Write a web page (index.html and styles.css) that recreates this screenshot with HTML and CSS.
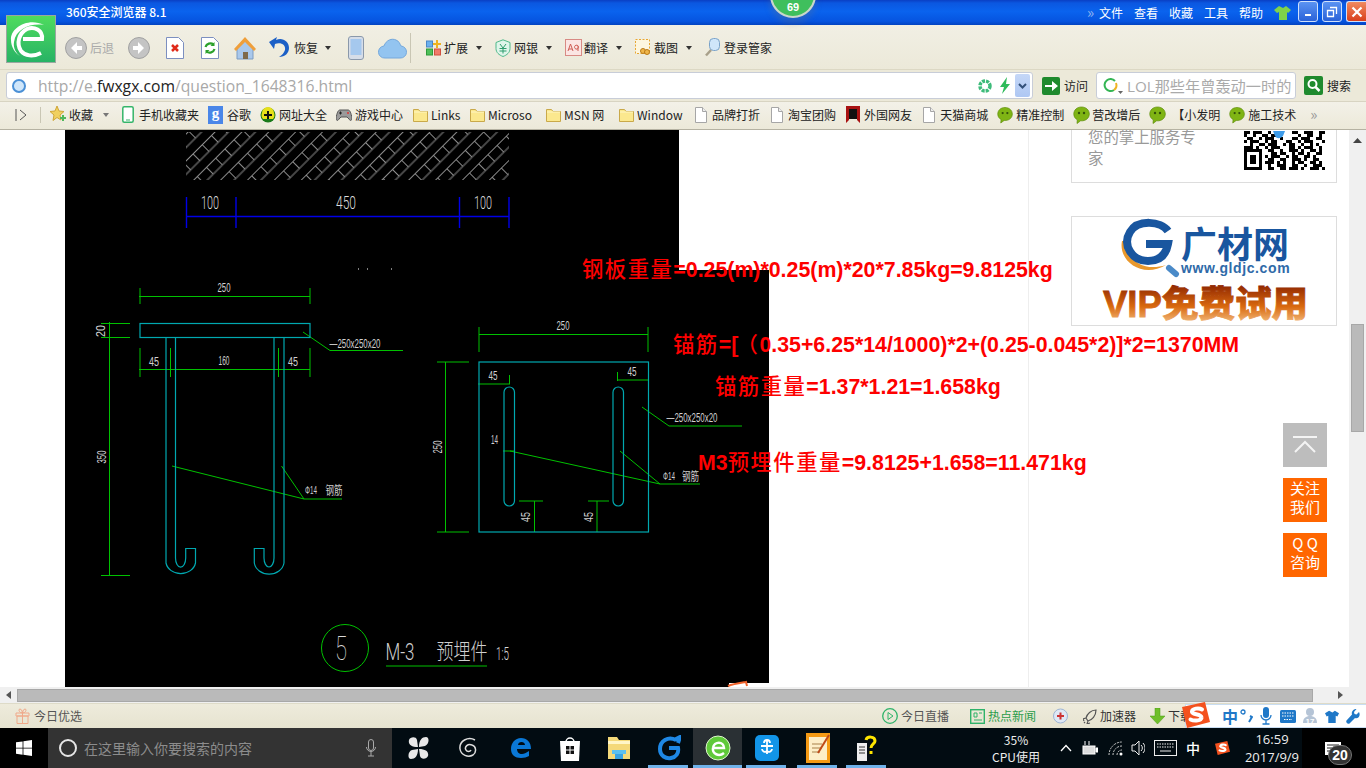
FILE: index.html
```html
<!DOCTYPE html>
<html lang="zh-CN">
<head>
<meta charset="utf-8">
<title>360安全浏览器 8.1</title>
<link rel="stylesheet" href="styles.css">
</head>
<body>
<svg class="defs" width="0" height="0" aria-hidden="true">
  <defs>
    <symbol id="i-folder" viewBox="0 0 15 15"><path d="M.5 2.500h5l1.500 2h7.500v10H.5z" fill="#fbe88e" stroke="#c9a94a"/><path d="M1 5h13" stroke="#fff6c4"/></symbol>
    <symbol id="i-doc" viewBox="0 0 12 16"><path d="M.5.5h7l4 4v11H.5z" fill="#fff" stroke="#a6a6a6"/><path d="M7.500.5v4h4" fill="#eee" stroke="#a6a6a6"/></symbol>
    <symbol id="i-chat" viewBox="0 0 17 18"><path d="M8.500 1C4 1 .8 4 .8 8c0 2.700 1.400 4.600 3.500 5.800L4 17.500l3.600-2.700C12.800 15.300 16.300 12 16.300 8 16.300 4 13 1 8.500 1z" fill="#7fb414" stroke="#5c8c08" stroke-width=".7"/><circle cx="6" cy="7" r="1.200" fill="#33510a"/><circle cx="11" cy="7" r="1.200" fill="#33510a"/></symbol>
    <symbol id="i-s" viewBox="0 0 28 26"><path d="M0 5L23 0l5 20-23 6z" fill="#f4511e"/><path d="M20 7.500c-3-2-10-1-10 2-.5 3.500 9 2 9.500 6 .5 3-7 4-11 2" fill="none" stroke="#fff" stroke-width="4" stroke-linecap="round"/></symbol>
    <linearGradient id="vip" x1="0" y1="0" x2="0" y2="1"><stop offset="0" stop-color="#8c2400"/><stop offset=".55" stop-color="#d9690f"/><stop offset="1" stop-color="#f5c48a"/></linearGradient>
    <pattern id="hatch" width="26" height="19" patternUnits="userSpaceOnUse" patternTransform="rotate(-45 186 132)">
      <path d="M0 .5H26M0 10H26M6.500 .5V10M19.500 .5V10" stroke="#8c8c8c" stroke-width="1" fill="none"/>
    </pattern>
  </defs>
</svg>

<div class="screen">
  <header class="titlebar">
    <span class="app-title">360安全浏览器 8.1</span>
    <span class="chev g-auto">»</span>
    <nav class="menu">
      <span>文件</span><span>查看</span><span>收藏</span><span>工具</span><span>帮助</span>
    </nav>
    <svg class="g11 w17" height="16" viewBox="0 0 17 16"><path d="M5 1L0 5l3 3 2-1v8h8V7l1 1 3-3-5-4-3 2z" fill="#7fd24a"/></svg>
    <div class="winbtns">
      <span class="winbtn"><svg width="10" height="10" viewBox="0 0 10 10"><path d="M2 7h6v2H2z" fill="#fff"/></svg></span>
      <span class="winbtn"><svg width="12" height="12" viewBox="0 0 12 12"><path d="M4 1.500h6.500V8M1.500 4.500h6v6h-6z" fill="none" stroke="#fff" stroke-width="1.300"/></svg></span>
      <span class="winbtn close"><svg width="12" height="12" viewBox="0 0 12 12"><path d="M1.500 1.500l9 9M10.500 1.500l-9 9" stroke="#fff" stroke-width="2.200"/></svg></span>
    </div>
  </header>

  <div class="badge69"><span>69</span></div>

  <svg class="logo360" width="50" height="48" viewBox="0 0 50 48">
    <defs><linearGradient id="tile" x1="0" y1="0" x2="0" y2="1"><stop offset="0" stop-color="#4fdc5e"/><stop offset="1" stop-color="#27b265"/></linearGradient></defs>
    <rect x=".5" y=".5" width="49" height="47" fill="url(#tile)" stroke="#9aa7a0"/>
    <path d="M17 24h19c1-9-8-13-15-10-8 4-11 14-6 22 4 5 12 6 20 2" fill="none" stroke="#fff" stroke-width="4"/>
    <path d="M5 25C4 13 22 2 38 10 24 8 10 14 8 27c-1 6 2 11 6 14C9 38 5 32 5 25z" fill="#fff"/>
  </svg>

  <div class="toolbar">
    <svg class="w22" height="22" viewBox="0 0 22 22"><circle cx="11" cy="11" r="10.500" fill="#c4c4c4" stroke="#a0a0a0"/><path d="M12 5l-6 6 6 6v-4h5V9h-5z" fill="#fff"/></svg>
    <span class="g3 muted">后退</span>
    <svg class="g14 w22" height="22" viewBox="0 0 22 22"><circle cx="11" cy="11" r="10.500" fill="#c4c4c4" stroke="#a0a0a0"/><path d="M10 5l6 6-6 6v-4H5V9h5z" fill="#fff"/></svg>
    <svg class="g16 w18" height="22" viewBox="0 0 18 22"><path d="M.5.5h12l5 5v16H.5z" fill="#fff" stroke="#7c8fc0"/><path d="M6 8l6 6M12 8l-6 6" stroke="#e02a1a" stroke-width="2.500"/></svg>
    <svg class="g17 w18" height="22" viewBox="0 0 18 22"><path d="M.5.500h12l5 5v16H.5z" fill="#fff" stroke="#7c8fc0"/><path d="M4.500 10a5 5 0 0 1 8-2.500M13.500 12a5 5 0 0 1-8 2.500" fill="none" stroke="#2ba02b" stroke-width="2.200"/><path d="M13.500 5v4h-4zM4.500 17v-4h4z" fill="#2ba02b"/></svg>
    <svg class="g14 w24" height="24" viewBox="0 0 24 24"><path d="M4 12v11h16V12L12 5z" fill="#a9c8ec" stroke="#7d9cc2"/><path d="M10 23v-7h5v7z" fill="#7f6a4b"/><path d="M1 13L12 1l11 12-2 2-9-9-9 9z" fill="#ef9f3b"/></svg>
    <svg class="g11 w22" height="24" viewBox="0 0 22 24"><path d="M9 1L1 6l5 7 1-5c6-2 11 1 10 6-1 3-3 5-6 7 6 0 10-4 10-9C21 5 14 1 8 4z" fill="#1b5fc6"/></svg>
    <span class="g4">恢复</span>
    <span class="caret g7"></span>
    <svg class="g17 w16" height="24" viewBox="0 0 16 24"><rect x=".5" y=".5" width="15" height="23" rx="2.500" fill="#d6dde8" stroke="#8a98aa"/><rect x="2.500" y="3" width="11" height="16" fill="#a5c8ee"/></svg>
    <svg class="g14 w29" height="22" viewBox="0 0 29 22"><path d="M7 21a6 6 0 0 1-1-12C8 3 14 1 18 3c3 1 4 4 5 6a6 6 0 0 1-1 12z" fill="#93c4f0" stroke="#74a8dc"/></svg>
    <i class="vsep g3"></i>
    <svg class="g15 w15" height="16" viewBox="0 0 15 16"><rect x=".5" y="1" width="6" height="6" fill="#6bb0ee" stroke="#4a86c8"/><rect x=".5" y="9" width="6" height="6" fill="#4fc05a" stroke="#2f9a3a"/><rect x="8.500" y="9" width="6" height="6" fill="#f07b6b" stroke="#d0503f"/><path d="M10 0h2v3h3v2h-3v3h-2V5H7V3h3z" fill="#efb320"/></svg>
    <span class="g3">扩展</span>
    <span class="caret g8"></span>
    <svg class="g13 w16" height="18" viewBox="0 0 16 18"><path d="M8 .8l7 2.700v6c0 4-3 6.500-7 8-4-1.500-7-4-7-8v-6z" fill="#dff5ea" stroke="#4fb98a"/><path d="M5 5l3 4 3-4M4.500 9.500h7M4.500 12h7M8 9v5.500" fill="none" stroke="#2f9d6e"/></svg>
    <span class="g3">网银</span>
    <span class="caret g8"></span>
    <svg class="g13 w17" height="17" viewBox="0 0 17 17"><rect x=".5" y=".5" width="16" height="16" fill="#fbe5e3" stroke="#d88a84"/><path d="M3 12l2.500-7 2.500 7M4 10h3M13 7v5M13 9.500a2 2 0 1 0-.1.100" fill="none" stroke="#cf5c54"/></svg>
    <span class="g2">翻译</span>
    <span class="caret g8"></span>
    <svg class="g13 w15" height="17" viewBox="0 0 15 17"><rect x=".5" y=".5" width="14" height="14" fill="#fdf6df" stroke="#e8a732" stroke-dasharray="2 1.500"/><circle cx="8" cy="12" r="2.500" fill="#f0b64a" stroke="#b97a18"/><circle cx="12" cy="13" r="2.500" fill="#f0b64a" stroke="#b97a18"/></svg>
    <span class="g4">截图</span>
    <span class="caret g8"></span>
    <svg class="g13 w15" height="19" viewBox="0 0 15 19"><rect x="4.500" y=".5" width="10" height="12" rx="4" fill="#cfe6fa" stroke="#7aa2c8"/><path d="M6 12l-5 5.500" stroke="#a8a08a" stroke-width="2.500"/></svg>
    <span class="g4">登录管家</span>
  </div>

  <div class="addrbar">
    <div class="urlbox">
      <svg class="w14" height="14" viewBox="0 0 14 14"><circle cx="7" cy="7" r="6" fill="#cfe6fa" stroke="#4b90d6" stroke-width="2"/></svg>
      <span class="url">http://e.<b>fwxgx.com</b>/question_1648316.html</span>
      <svg class="g-auto w14" height="14" viewBox="0 0 14 14"><circle cx="7" cy="7" r="5" fill="none" stroke="#3dbb7a" stroke-width="3.500" stroke-dasharray="3 1"/></svg>
      <svg class="g7 w12" height="17" viewBox="0 0 12 17"><path d="M8 0L1 10h4l-2 7 8-10H7z" fill="#2fbb5a"/></svg>
      <span class="dropdown g4"><svg width="9" height="6" viewBox="0 0 9 6"><path d="M1 1l3.500 3.500L8 1" fill="none" stroke="#33507a" stroke-width="2"/></svg></span>
    </div>
    <svg class="g9 w18" height="18" viewBox="0 0 18 18"><rect width="18" height="18" rx="2" fill="#1f8a2e"/><path d="M3 8h7V4l6 5-6 5v-4H3z" fill="#fff"/></svg>
    <span class="g4">访问</span>
    <div class="searchbox">
      <svg class="w20" height="16" viewBox="0 0 20 16"><path d="M11 12a6 6 0 1 1 1-9" fill="none" stroke="#34b554" stroke-width="2"/><path d="M13 5a6 6 0 0 1-2 7" fill="none" stroke="#f0b323" stroke-width="2"/><path d="M15 13h5l-2.500 3z" fill="#666"/></svg>
      <span class="placeholder">LOL那些年曾轰动一时的</span>
    </div>
    <svg class="g8 w19" height="19" viewBox="0 0 19 19"><rect width="19" height="19" rx="2" fill="#1f8a2e"/><circle cx="8.500" cy="8" r="4" fill="none" stroke="#fff" stroke-width="2"/><path d="M11.500 11l4 4" stroke="#fff" stroke-width="2.500"/></svg>
    <span class="g4">搜索</span>
  </div>

  <div class="bookmarks">
    <svg class="w12 g15" height="12" viewBox="0 0 12 12"><path d="M1 0v12M5 1l6 5-6 5" fill="none" stroke="#555"/></svg>
    <i class="vsep short g13"></i>
    <svg class="g9 w16" height="17" viewBox="0 0 16 17"><path d="M7 0l2 5 5 .5-4 3.500 1 5-4-2.500L3 14.500l1-5.500L0 5.500 5 5z" fill="#f0d060" stroke="#cfa638"/><path d="M10 11h2V9h2v2h2v2h-2v2h-2v-2h-2z" fill="#4fb85a"/></svg>
    <span class="g3">收藏</span>
    <span class="caret gray g10"></span>
    <svg class="g13 w12" height="17" viewBox="0 0 12 17"><rect x=".8" y=".8" width="10.400" height="15.400" rx="1.500" fill="#fff" stroke="#35b56a" stroke-width="1.500"/><path d="M4 14h4" stroke="#35b56a"/></svg>
    <span class="g5">手机收藏夹</span>
    <span class="gbox g9">g</span>
    <span class="g4">谷歌</span>
    <svg class="g9 w16" height="16" viewBox="0 0 16 16"><circle cx="8" cy="8" r="7.500" fill="#1a7a1a"/><path d="M2 6a6 6 0 0 1 12 0 6 6 0 0 1-1 6H3a6 6 0 0 1-1-6z" fill="#e8e01a"/><path d="M7 4h2v3h3v2H9v3H7V9H4V7h3z" fill="#111"/></svg>
    <span class="g3">网址大全</span>
    <svg class="g9 w16" height="12" viewBox="0 0 16 12"><path d="M4 1h8c2 0 3 3 4 8 0 3-2 3-3 1l-2-2H5l-2 2c-1 2-3 2-3-1 1-5 2-8 4-8z" fill="#9a9a9a" stroke="#555"/><circle cx="12" cy="4" r="1" fill="#d33"/><path d="M3 4h3M4.500 2.500v3" stroke="#222"/></svg>
    <span class="g3">游戏中心</span>
    <svg class="g10 w15" height="15"><use href="#i-folder"/></svg>
    <span class="g3 bt29">Links</span>
    <svg class="g10 w15" height="15"><use href="#i-folder"/></svg>
    <span class="g3 bt48">Microso</span>
    <svg class="g10 w15" height="15"><use href="#i-folder"/></svg>
    <span class="g3 bt45">MSN 网</span>
    <svg class="g10 w15" height="15"><use href="#i-folder"/></svg>
    <span class="g3 bt48">Window</span>
    <svg class="g10 w12" height="16"><use href="#i-doc"/></svg>
    <span class="g5">品牌打折</span>
    <svg class="g11 w12" height="16"><use href="#i-doc"/></svg>
    <span class="g5">淘宝团购</span>
    <svg class="g10 w14" height="17" viewBox="0 0 14 17"><path d="M0 0h14v17l-3-3V3H3v11l-3 3z" fill="#a81212"/><rect x="3" y="3" width="8" height="10" fill="#111"/></svg>
    <span class="g4">外国网友</span>
    <svg class="g11 w12" height="16"><use href="#i-doc"/></svg>
    <span class="g5">天猫商城</span>
    <svg class="g9 w16" height="18"><use href="#i-chat"/></svg>
    <span class="g3">精准控制</span>
    <svg class="g9 w17" height="18"><use href="#i-chat"/></svg>
    <span class="g2">营改增后</span>
    <svg class="g9 w17" height="18"><use href="#i-chat"/></svg>
    <span class="g6">【小发明</span>
    <svg class="g9 w16" height="18"><use href="#i-chat"/></svg>
    <span class="g3">施工技术</span>
    <span class="chev dark g14">»</span>
  </div>

  <div class="viewport">
    <main class="page">
      <section class="article">
        <svg class="drawing" width="704" height="557" viewBox="65 130 704 557">
          <path d="M65 130H679V270H769V683H729V687H65z" fill="#000"/>
          <rect x="186" y="132" width="323" height="48" fill="url(#hatch)"/>
          <g class="blue">
            <path d="M186 216.500H509M186.500 197V228M236 197V228M459.500 197V228M509 197V228"/>
          </g>
          <g class="green">
            <path d="M139 296.500H310M140 288V304M310 288V304"/>
            <path d="M101 323.500H130M101 337.500H130M109.500 322V576M101 575.500H130"/>
            <path d="M139 369.500H310M140 348V377M170.500 348V377M278.500 348V377M310 348V377"/>
            <path d="M303 332L330 350.500H403"/>
            <path d="M172 466L304 499H342M281.500 466L304 499"/>
            <circle cx="345" cy="648" r="23.500"/>
            <path d="M386 666H487"/>
            <path d="M479 334.500H648M479 327V352M648 327V352"/>
            <path d="M445.500 362V532M437 362H469M437 532H469"/>
            <path d="M478 384H510M509.500 375V384"/>
            <path d="M617.500 380H648M617.500 372V381"/>
            <path d="M503 451H515"/>
            <path d="M510 451L660 484H700M620 451L660 484"/>
            <path d="M642 407L669 426H742"/>
            <path d="M519 501H543M534.500 501V532"/>
            <path d="M588 501H609M597 501V532"/>
          </g>
          <g class="teal">
            <rect x="140" y="323.500" width="170" height="14"/>
            <path d="M166 337V563A15 13 0 0 0 195.500 563V548.500H185.700V558A5 9 0 0 1 175.500 558V337"/>
            <path d="M284 337V563A15 13 0 0 1 254.300 563V548.500H264V558A5 9 0 0 0 274 558V337"/>
            <rect x="479" y="362" width="169.500" height="170"/>
            <rect x="504" y="387" width="10.500" height="119" rx="5.200"/>
            <rect x="613" y="387" width="10.500" height="119" rx="5.200"/>
          </g>
          <g class="cad">
            <text x="210" y="209" textLength="18" lengthAdjust="spacingAndGlyphs" class="big">100</text>
            <text x="346" y="209" textLength="20" lengthAdjust="spacingAndGlyphs" class="big">450</text>
            <text x="483" y="209" textLength="18" lengthAdjust="spacingAndGlyphs" class="big">100</text>
            <text x="224" y="292" textLength="13" lengthAdjust="spacingAndGlyphs">250</text>
            <text x="154" y="366" textLength="10" lengthAdjust="spacingAndGlyphs">45</text>
            <text x="224" y="365" textLength="11" lengthAdjust="spacingAndGlyphs">160</text>
            <text x="293" y="366" textLength="10" lengthAdjust="spacingAndGlyphs">45</text>
            <text x="355" y="348" textLength="51" lengthAdjust="spacingAndGlyphs">—250x250x20</text>
            <text x="311" y="494" textLength="12" lengthAdjust="spacingAndGlyphs" class="tiny">Φ14</text>
            <text x="334" y="495" textLength="17" lengthAdjust="spacingAndGlyphs">钢筋</text>
            <text transform="translate(105 331) rotate(-90)" textLength="12" lengthAdjust="spacingAndGlyphs">20</text>
            <text transform="translate(106 457) rotate(-90)" textLength="13" lengthAdjust="spacingAndGlyphs">350</text>
            <text x="563" y="330" textLength="13" lengthAdjust="spacingAndGlyphs">250</text>
            <text transform="translate(442 447) rotate(-90)" textLength="13" lengthAdjust="spacingAndGlyphs">250</text>
            <text x="493" y="380" textLength="9" lengthAdjust="spacingAndGlyphs">45</text>
            <text x="632" y="376" textLength="9" lengthAdjust="spacingAndGlyphs">45</text>
            <text x="494.500" y="444" textLength="7" lengthAdjust="spacingAndGlyphs">14</text>
            <text x="692" y="422" textLength="51" lengthAdjust="spacingAndGlyphs">—250x250x20</text>
            <text x="669" y="480" textLength="12" lengthAdjust="spacingAndGlyphs" class="tiny">Φ14</text>
            <text x="690.500" y="481" textLength="17" lengthAdjust="spacingAndGlyphs">钢筋</text>
            <text transform="translate(530 517) rotate(-90)" textLength="10" lengthAdjust="spacingAndGlyphs">45</text>
            <text transform="translate(593 517) rotate(-90)" textLength="10" lengthAdjust="spacingAndGlyphs">45</text>
            <text x="341" y="660" textLength="12" lengthAdjust="spacingAndGlyphs" class="huge">5</text>
            <text x="400" y="660" textLength="29" lengthAdjust="spacingAndGlyphs" class="title">M-3</text>
            <text x="462" y="659" textLength="51" lengthAdjust="spacingAndGlyphs" class="title cjk">预埋件</text>
            <text x="502.500" y="660" textLength="13" lengthAdjust="spacingAndGlyphs" class="big">1:5</text>
          </g>
          <path d="M358 269h1M367 269h1M391 269h1" stroke="#fff"/>
          <path d="M728 686c5-2 12-3 18-4l1 4" fill="none" stroke="#f0622a" stroke-width="2"/>
        </svg>
      </section>
      <aside class="sidebar">
        <div class="card promo">
          <p class="promo-text">您的掌上服务专家</p>
          <svg class="qr" width="81" height="39" viewBox="0 0 81 39">
            <path d="M0 1.500h6m3 0h9m6 0h3m21 0h6m6 0h9m6 0h6M0 4.500h3m6 0h3m6 0h6m3 0h6m21 0h3m6 0h6m6 0h3m3 0h3M3 7.500h6m6 0h3m3 0h9m6 0h3m9 0h6m3 0h9m6 0h6M0 10.500h3m3 0h9m6 0h3m3 0h6m9 0h6m6 0h3m3 0h9m9 0h3M6 13.500h3m6 0h6m3 0h9m6 0h3m3 0h6m6 0h3m6 0h3m3 0h3M0 16.500h9m3 0h3m6 0h3m3 0h9m9 0h6m3 0h3m3 0h9m6 0h3M0 19.500h18m6 0h6m6 0h3m6 0h9m3 0h3m6 0h6m3 0h3M0 22.500h3m12 0h3m9 0h6m3 0h6m6 0h3m3 0h6m3 0h3m6 0h6M0 25.500h3m3 0h6m3 0h3m3 0h3m3 0h9m6 0h3m3 0h6m6 0h6m3 0h3M0 28.500h3m3 0h6m3 0h3m6 0h6m6 0h6m6 0h9m3 0h3m6 0h6M0 31.500h3m3 0h6m3 0h3m3 0h9m3 0h3m3 0h3m6 0h3m3 0h6m6 0h6m3 0h3M0 34.500h3m12 0h3m6 0h3m6 0h9m6 0h6m6 0h3m6 0h9M0 37.500h18m6 0h6m6 0h6m3 0h9m3 0h3m6 0h9m3 0h3" stroke="#000" stroke-width="3" fill="none"/>
            <path d="M29 0h12l-2 5c-3 3-6 3-8 0z" fill="#3d9be9"/>
          </svg>
        </div>
        <div class="card gld">
          <svg width="264" height="108" viewBox="0 0 264 108">
            <path d="M50 24C46 44 70 62 94 48 72 55 56 44 52 24z" fill="#e9982c"/>
            <path d="M96 14C89 4 66 2 58 15 50 28 60 44 76 44 88 44 94 38 96 27H74" fill="none" stroke="#19569f" stroke-width="8"/>
            <path d="M97 51l7 6" stroke="#4a8ac8" stroke-width="6" stroke-linecap="round"/>
            <text x="109" y="41" class="gld-name">广材网</text>
            <text x="109" y="56" class="gld-url">www.gldjc.com</text>
            <text x="31" y="100" class="gld-vip" textLength="205" lengthAdjust="spacingAndGlyphs">VIP免费试用</text>
          </svg>
        </div>
      </aside>
      <div class="notes">
        <p class="note n1"><em>钢板重量</em>=0.25(m)*0.25(m)*20*7.85kg=9.8125kg</p>
        <p class="note n2"><em>锚筋</em>=[<em class="paren">（</em>0.35+6.25*14/1000)*2+(0.25-0.045*2)]*2=1370MM</p>
        <p class="note n3"><em>锚筋重量</em>=1.37*1.21=1.658kg</p>
        <p class="note n4">M3<em>预埋件重量</em>=9.8125+1.658=11.471kg</p>
      </div>
      <div class="floaters">
        <span class="fbtn top"><svg width="26" height="18" viewBox="0 0 26 18"><path d="M1 1h24M3 16L13 6l10 10" fill="none" stroke="#f4f4f4" stroke-width="2"/></svg></span>
        <span class="fbtn">关注<br>我们</span>
        <span class="fbtn">Q Q<br>咨询</span>
      </div>
    </main>
    <div class="vscroll">
      <svg class="arrow-up" width="9" height="6" viewBox="0 0 9 6"><path d="M4.500 0L9 5H0z" fill="#444"/></svg>
      <div class="vthumb"></div>
    </div>
  </div>

  <div class="hscroll">
    <svg width="5" height="8" viewBox="0 0 5 8" class="harrow"><path d="M5 0v8L0 4z" fill="#555"/></svg>
    <div class="hthumb"></div>
    <svg width="5" height="8" viewBox="0 0 5 8" class="harrow right"><path d="M0 0v8l5-4z" fill="#555"/></svg>
  </div>

  <footer class="statusbar">
    <svg class="w15" height="16" viewBox="0 0 15 16"><path d="M1 5h13v3H1zM2 8h11v7.500H2zM7.500 5v10.500M7.500 5C4 5 3 1 5 1s2.500 4 2.500 4 .5-4 2.500-4 1 4-2.500 4z" fill="none" stroke="#f0a98a"/></svg>
    <span class="g4 soft">今日优选</span>
    <svg class="g-auto w16" height="16" viewBox="0 0 16 16"><circle cx="8" cy="8" r="7.300" fill="none" stroke="#2fb36a" stroke-width="1.300"/><path d="M6 4.500l5 3.500-5 3.500z" fill="none" stroke="#2fb36a"/></svg>
    <span class="g3 soft">今日直播</span>
    <svg class="g21 w15" height="16" viewBox="0 0 15 16"><rect x=".7" y="1.700" width="13.600" height="13.600" fill="none" stroke="#2fb36a" stroke-width="1.400"/><path d="M4 5h3v4H4zM9 5h3M4 12h8" stroke="#2fb36a" fill="none"/></svg>
    <span class="g3 news">热点新闻</span>
    <svg class="g17 w15" height="16" viewBox="0 0 15 16"><circle cx="7.500" cy="8" r="7" fill="#dfe8f5" stroke="#9db4d4"/><path d="M6.500 4.500h2v2.500H11v2H8.500v2.500h-2V9H4V7h2.500z" fill="#c33"/></svg>
    <svg class="g15 w14" height="15" viewBox="0 0 14 15"><path d="M13 1C8 1 4 5 3 9l2 3c4-1 8-5 8-11zM3 9L0 10l1 2M5 12l-1 3 3-1M2 13l-1 1" fill="none" stroke="#555" stroke-width="1.200"/></svg>
    <span class="g3">加速器</span>
    <svg class="g14 w15" height="16" viewBox="0 0 15 16"><path d="M5 0h5v8h5l-7.500 8L0 8h5z" fill="#6fbf2a" stroke="#4b9a15" stroke-width=".5"/></svg>
    <span class="g3">下载</span>
    <div class="ime">
      <svg class="ime-logo" width="28" height="26"><use href="#i-s"/></svg>
      <span class="ime-zh">中</span>
      <svg class="ime-i g2" width="13" height="14" viewBox="0 0 13 14"><circle cx="3" cy="3" r="2" fill="none" stroke="#1f78c8" stroke-width="1.300"/><path d="M10 7l2 1-3 5" fill="none" stroke="#1f78c8" stroke-width="2"/></svg>
      <svg class="ime-i g7" width="12" height="18" viewBox="0 0 12 18"><rect x="3" y="0" width="6" height="11" rx="3" fill="#1f78c8"/><path d="M1 8a5 5 0 0 0 10 0M6 13v4M2.500 17h7" fill="none" stroke="#1f78c8" stroke-width="1.300"/></svg>
      <svg class="ime-i g8" width="16" height="13" viewBox="0 0 16 13"><rect width="16" height="13" rx="1.500" fill="#1f78c8"/><path d="M2 3h12M2 6h12M4 9.500h8" stroke="#fff" stroke-dasharray="1.500 1"/></svg>
      <svg class="ime-i g6" width="17" height="18" viewBox="0 0 17 18"><circle cx="8" cy="5" r="4" fill="#b5c4d6"/><path d="M1 16c0-5 3-7 7-7s7 2 7 7z" fill="#b5c4d6"/><text x="8" y="17" class="ime-n">17</text></svg>
      <svg class="ime-i g6" width="14" height="15" viewBox="0 0 17 16"><path d="M5 1L0 4l2 4 2-1v9h9V7l2 1 2-4-5-3-3 2z" fill="#1f78c8"/></svg>
      <svg class="ime-i g7" width="14" height="15" viewBox="0 0 14 15"><path d="M13 3l-2.500 2.500-2-.5-.5-2L10.500 0C8 0 5 2 6 5.500L.5 11.500c-1 2 1 4 3 3L9 9c3 1 6-2 4-6z" fill="#1f78c8"/></svg>
    </div>
  </footer>

  <div class="taskbar">
    <div class="start"><svg width="16" height="16" viewBox="0 0 16 16"><path d="M0 2.300l6.600-.9v6.300H0zM7.400 1.300L16 0v7.700H7.400zM0 8.400h6.600v6.300L0 13.800zM7.400 8.400H16V16l-8.600-1.200z" fill="#fff"/></svg></div>
    <div class="tsearch">
      <svg class="w18" height="18" viewBox="0 0 18 18"><circle cx="9" cy="9" r="8" fill="none" stroke="#e6e6e6" stroke-width="2"/></svg>
      <span class="tsearch-text">在这里输入你要搜索的内容</span>
      <svg class="g-auto w10" height="18" viewBox="0 0 10 18"><rect x="2.500" y=".5" width="5" height="11" rx="2.500" fill="none" stroke="#aaa"/><path d="M.5 8a4.500 4.500 0 0 0 9 0M5 13v4M2 17h6" fill="none" stroke="#aaa"/></svg>
    </div>
    <div class="tasks">
      <span class="task g2"><svg width="21" height="24" viewBox="0 0 21 24"><path d="M10 11C3 11 0 8 1 4c1-3 7-4 8 0zM11 11c0-7 3-10 7-10s3 8-1 9zM10 13c0 7-3 10-7 10s-3-8 1-9zM11 13c7 0 10 3 9 7-1 3-7 4-8 0z" fill="#e8e8e8"/></svg></span>
      <span class="task"><svg width="20" height="22" viewBox="0 0 20 22"><path d="M17 3C10-1 1 4 2 12c1 6 8 9 13 6 4-3 3-9-1-10-4-2-8 2-6 5 1 2 4 2 5 0" fill="none" stroke="#ddd" stroke-width="1.500"/></svg></span>
      <span class="task g4"><svg width="20" height="22" viewBox="0 0 20 22"><path d="M6 12h14C20 5 16 1 10 1 4 1 0 6 0 12c0 6 4 9 10 9 3 0 6-1 8-2v-5c-3 2-5 3-7 3-3 0-5-2-5-5z" fill="#0a78d7"/><path d="M7 8h7c0-4-7-4-7 0z" fill="#000c14"/></svg></span>
      <span class="task"><svg width="20" height="26" viewBox="0 0 20 26"><path d="M6 7a4 4 0 0 1 8 0" fill="none" stroke="#fff" stroke-width="1.500"/><path d="M0 6h20l-1 20H1z" fill="#fff"/><path d="M6 11h3.500v3.500H6zM10.500 11H14v3.500h-3.500zM6 15.500h3.500V19H6zM10.500 15.500H14V19h-3.500z" fill="#111"/></svg></span>
      <span class="task"><svg width="22" height="22" viewBox="0 0 22 22"><path d="M0 0h9l2 3h11v19H0z" fill="#f4d97a"/><path d="M0 4h22v3H0z" fill="#fff6c8"/><path d="M7 13h8v9H7z" fill="#3aa3e3"/><path d="M4 13h14v4H4z" fill="#5cc0f0"/></svg></span>
      <span class="task g1 on"><svg width="24" height="26" viewBox="0 0 24 26"><path d="M19 5C11 1 3 6 3 14c0 7 6 10 11 9 5-1 8-5 7-10H12M17 5l6-3-2 6" fill="none" stroke="#1e88e5" stroke-width="4"/></svg></span>
      <span class="task active"><svg width="26" height="26" viewBox="0 0 26 26"><circle cx="13" cy="13" r="12" fill="#5fc93a" stroke="#dff5cf"/><path d="M7 13h12c0-7-10-7-11 0-1 6 6 9 11 5" fill="none" stroke="#fff" stroke-width="2.500"/></svg></span>
      <span class="task on"><svg width="24" height="26" viewBox="0 0 24 26"><rect width="24" height="26" rx="5" fill="#1295e8"/><path d="M12 5v14M6 11h12M9 8a3 3 0 1 1 6 0M7 14a3 3 0 0 0 5 2 3 3 0 0 0 5-2" fill="none" stroke="#fff" stroke-width="1.800"/></svg></span>
      <span class="task g2 on"><svg width="24" height="30" viewBox="0 0 24 30"><rect width="24" height="30" fill="#f59a14"/><rect x="3" y="4" width="18" height="23" fill="#fdeec8"/><path d="M6 11h10M6 15h10M6 19h8" stroke="#a8814a"/><path d="M23 2L12 20" stroke="#c04a18" stroke-width="2"/></svg></span>
      <span class="task on"><svg width="20" height="26" viewBox="0 0 20 26"><path d="M0 8h10v18H0z" fill="#eee"/><path d="M2 12h6M2 15h6M2 18h6" stroke="#333"/><path d="M9 5c1-4 9-4 9 1 0 3-4 3-4 7M14 16v3" fill="none" stroke="#ffe600" stroke-width="3"/></svg></span>
    </div>
    <div class="cpu g95"><span>35%</span><span>CPU使用</span></div>
    <svg class="g14 w12" height="8" viewBox="0 0 12 8"><path d="M1 7l5-5.500L11 7" fill="none" stroke="#fff" stroke-width="1.300"/></svg>
    <svg class="g10 w16" height="14" viewBox="0 0 16 14"><rect x="1" y="5" width="12" height="8" fill="#ddd" stroke="#fff"/><path d="M14 7h2v4h-2zM3 0v4M7 0v4" stroke="#fff" fill="#fff"/></svg>
    <svg class="g10 w16" height="15" viewBox="0 0 16 15"><path d="M1 14A13 13 0 0 1 14 1M5 14A9 9 0 0 1 14 5M9 14a5 5 0 0 1 5-5" fill="none" stroke="#ccc" stroke-dasharray="2 1"/><circle cx="13" cy="13" r="1.500" fill="#fff"/></svg>
    <svg class="g7 w14" height="16" viewBox="0 0 14 16"><path d="M1 5h3l4-4v14l-4-4H1z" fill="none" stroke="#eee"/><path d="M10 5a4 4 0 0 1 0 6M12 3a7 7 0 0 1 0 10" fill="none" stroke="#eee"/></svg>
    <svg class="g9 w23" height="16" viewBox="0 0 23 16"><rect x=".5" y=".5" width="22" height="15" fill="none" stroke="#eee"/><path d="M3 4h17M3 7h17" stroke="#eee" stroke-dasharray="1.500 1"/><path d="M6 11h11" stroke="#eee"/></svg>
    <span class="tray-zh g9">中</span>
    <svg class="g15 w15" height="16" viewBox="0 0 28 26"><use href="#i-s"/></svg>
    <div class="clock"><span>16:59</span><span>2017/9/9</span></div>
    <div class="notify">
      <svg width="16" height="16" viewBox="0 0 16 16"><path d="M0 0h16v13H0z" fill="#fff"/><path d="M2 3h12M2 6h12M2 9h12" stroke="#222"/></svg>
      <span class="ncount">20</span>
    </div>
  </div>
</div>
</body>
</html>
```
FILE: styles.css
```css
* { box-sizing: border-box; }
html, body { margin: 0; padding: 0; background: #fff; overflow: hidden; }
body { font: 12px/16px "Noto Sans CJK SC", "Liberation Sans", sans-serif; color: #222; }
p { margin: 0; }
em { font-style: normal; }
.defs { position: absolute; }
svg { flex: none; display: block; }
span { flex: none; }

.screen { position: relative; width: 1366px; height: 768px; display: flex; flex-direction: column; overflow: hidden; }

.w10 { width: 10px; } .w12 { width: 12px; } .w14 { width: 14px; } .w15 { width: 15px; }
.w16 { width: 16px; } .w17 { width: 17px; } .w18 { width: 18px; } .w19 { width: 19px; }
.w20 { width: 20px; } .w22 { width: 22px; } .w23 { width: 23px; } .w24 { width: 24px; } .w29 { width: 29px; }
.g1 { margin-left: 1px; } .g2 { margin-left: 2px; } .g3 { margin-left: 3px; } .g4 { margin-left: 4px; }
.g5 { margin-left: 5px; } .g6 { margin-left: 6px; } .g7 { margin-left: 7px; } .g8 { margin-left: 8px; }
.g9 { margin-left: 9px; } .g10 { margin-left: 10px; } .g11 { margin-left: 11px; } .g13 { margin-left: 13px; }
.g14 { margin-left: 14px; } .g15 { margin-left: 15px; } .g16 { margin-left: 16px; } .g17 { margin-left: 17px; }
.g21 { margin-left: 21px; } .g95 { margin-left: 95px; } .g-auto { margin-left: auto; }

/* title bar */
.titlebar { height: 25px; flex: none; display: flex; align-items: center; padding-left: 66px; color: #fff;
  background: linear-gradient(#0a3fc4 0, #0b57e0 12%, #0a63ee 45%, #0654e0 85%, #0343c0 100%); }
.app-title { font-weight: 500; position: relative; top: -1px; }
.chev { font-size: 15px; color: #8fb4f0; position: relative; top: -1px; width: 12px; }
.chev.dark { color: #999; }
.menu { display: flex; gap: 11px; margin-left: 0; }
.winbtns { display: flex; gap: 4px; margin-left: 7px; align-self: flex-start; margin-top: 1px; margin-right: 0; }
.winbtn { width: 20px; height: 21px; border: 1px solid #cfe0fb; border-radius: 3px; background: linear-gradient(#5b93f2, #2a62d8); display: flex; align-items: center; justify-content: center; }
.winbtn.close { background: linear-gradient(#f08a60, #d9401c); width: 20px; border-right: 0; border-radius: 3px 0 0 3px; }
.badge69 { position: absolute; left: 770px; top: -28px; width: 46px; height: 46px; border-radius: 50%; background: #3fbf5d; border: 2px solid #c9d6cb; box-shadow: 0 6px 6px rgba(120,120,110,.25); color: #fff; font-weight: 700; font-size: 11px; text-align: center; padding-top: 25px; line-height: 16px; font-family: "Liberation Sans", sans-serif; }
.logo360 { position: absolute; left: 6px; top: 15px; }

/* toolbar */
.toolbar { height: 45px; flex: none; display: flex; align-items: center; padding-left: 65px; background: linear-gradient(#f1efe4, #ece9d9); padding-top: 1px; border-bottom: 1px solid #dcd8c4; }
.muted { color: #aaa; }
.caret { width: 0; height: 0; border: 3px solid transparent; border-top: 4px solid #333; border-bottom: 0; }
.caret.gray { border-top-color: #777; }
.vsep { width: 1px; height: 30px; background: #c9c6b4; flex: none; }
.vsep.short { height: 16px; }

/* address */
.addrbar { height: 32px; flex: none; display: flex; align-items: center; padding-left: 6px; background: #ece9d9; border-bottom: 1px solid #d8d4c2; }
.urlbox { width: 1027px; height: 27px; display: flex; align-items: center; padding: 0 2px 0 5px; background: #fff; border: 1px solid #c8cdd8; border-radius: 3px; }
.url { margin-left: 12px; font: 15.7px/20px "Open Sans", sans-serif; color: #a8a8a8; }
.url b { font-weight: 400; color: #222; }
.dropdown { width: 15px; height: 23px; display: flex; align-items: center; justify-content: center; background: linear-gradient(#c5d7f7, #aec7f3); border-radius: 2px; }
.searchbox { width: 200px; height: 27px; margin-left: 8px; display: flex; align-items: center; padding-left: 6px; background: #fff; border: 1px solid #c8cdd8; border-radius: 3px; overflow: hidden; }
.placeholder { margin-left: 4px; font: 15.2px/20px "Open Sans", "Noto Sans CJK SC", sans-serif; color: #aaa; white-space: nowrap; }

/* bookmarks */
.bookmarks { height: 28px; flex: none; display: flex; align-items: center; background: linear-gradient(#f3f1e8, #ece9d9); white-space: nowrap; border-bottom: 1px solid #b5b2a2; padding-bottom: 2px; }
.gbox { width: 15px; height: 18px; background: #4a86e8; color: #fff; text-align: center; line-height: 15px; font: 700 15px/15px "Liberation Serif", serif; }
.bt29 { width: 29px; } .bt45 { width: 45px; } .bt48 { width: 48px; overflow: hidden; }

/* viewport */
.viewport { flex: 1; min-height: 0; display: flex; }
.page { position: relative; flex: 1; display: flex; background: #fff; overflow: hidden; }
.article { width: 1029px; flex: none; padding-left: 65px; border-right: 1px solid #eeeeee; }
.sidebar { flex: 1; padding-left: 42px; }
.vscroll { width: 17px; flex: none; background: #f0f0f0; position: relative; padding: 0 2px; }
.arrow-up { margin: 8px auto 0; }
.vthumb { width: 13px; height: 108px; margin-top: 180px; background: #bababa; border: 1px solid #a8a8a8; }

.blue path { stroke: #0000e6; stroke-width: 1.400; fill: none; }
.green path, .green circle { stroke: #00c000; stroke-width: 1; fill: none; }
.teal path, .teal rect { stroke: #00a8b0; stroke-width: 1.200; fill: none; }
.cad text { fill: #d0d0d0; font: 12px "Liberation Sans", "Noto Sans CJK SC", sans-serif; text-anchor: middle; }
.cad text.big { font: 300 18px "Roboto", "Liberation Sans", sans-serif; fill: #dcdcdc; }
.cad text.tiny { font-size: 10px; }
.cad text.huge { font: 100 33px "Roboto", "Liberation Sans", sans-serif; fill: #d8d8d8; }
.cad text.title { font: 300 23px "Roboto", "Noto Sans CJK SC", sans-serif; fill: #cfcfcf; }
.cad text.title.cjk { font: 200 22px "Noto Sans CJK SC", sans-serif; }

.card { width: 266px; border: 1px solid #dddddd; background: #fff; }
.promo { height: 80px; margin-top: -27px; position: relative; padding: 22px 0 0 16px; margin-bottom: 33px; }
.promo-text { width: 120px; font-size: 15.4px; line-height: 21px; color: #999; }
.qr { position: absolute; left: 172px; top: 27px; }
.gld { height: 110px; }
.gld-name { font: 700 36px "Noto Sans CJK SC", sans-serif; fill: #19569f; }
.gld-url { font: 700 14px "Liberation Sans", sans-serif; fill: #2f6aa8; letter-spacing: .6px; }
.gld-vip { font: 900 36px "Liberation Sans", "Noto Sans CJK SC", sans-serif; fill: url(#vip); stroke: url(#vip); stroke-width: .8px; }

.notes { position: absolute; inset: 0; pointer-events: none; }
.note { position: absolute; font: 700 21.33px/26px "Liberation Sans", "Noto Sans CJK SC", sans-serif; color: #fe0000; white-space: nowrap; }
.note em { font-family: "Noto Sans CJK SC", sans-serif; font-weight: 500; letter-spacing: 1.500px; }
.note em.paren { margin-left: 9px; }
.n1 { left: 582px; top: 125px; }
.n2 { left: 673px; top: 200px; }
.n3 { left: 715px; top: 242px; }
.n4 { left: 698px; top: 318px; }

.floaters { position: absolute; left: 1283px; top: 293px; display: flex; flex-direction: column; gap: 11px; }
.fbtn { width: 44px; height: 44px; background: #ff6600; color: #fff; font-size: 15px; line-height: 19px; text-align: center; padding-top: 0; }
.fbtn.top { background: #bdbdbd; display: flex; align-items: center; justify-content: center; padding-top: 0; }

/* horizontal scroll */
.hscroll { height: 17px; flex: none; display: flex; align-items: center; background: #f0f0f0; border-bottom: 1px solid #dedbc8; position: relative; padding-left: 6px; }
.hthumb { width: 1296px; height: 13px; margin-left: 6px; background: #bababa; border: 1px solid #a8a8a8; }
.harrow.right { margin-left: 25px; }

/* status */
.statusbar { height: 24px; flex: none; position: relative; display: flex; align-items: center; padding: 0 174px 0 15px; background: linear-gradient(#eeebdc, #e6e3d0); color: #333; }
.soft { color: #555; }
.news { color: #2a9d4a; }
.ime { position: absolute; left: 1185px; right: 0; top: 0; height: 24px; background: #fff; border: 1px solid #c9ddf2; border-right: 0; display: flex; align-items: center; padding-left: 36px; }
.ime-logo { position: absolute; left: -4px; top: -3px; }
.ime-zh { width: 16px; font-size: 16px; font-weight: 700; color: #1f78c8; }
.ime-i { flex: none; }
.ime-n { font: 700 8px "Liberation Sans", sans-serif; fill: #fff; text-anchor: middle; }

/* taskbar */
.taskbar { height: 40px; flex: none; display: flex; align-items: center; background: #020c12; color: #fff; }
.start { width: 48px; height: 40px; flex: none; background: #000; display: flex; align-items: center; justify-content: center; }
.tsearch { width: 344px; height: 40px; flex: none; background: #333; display: flex; align-items: center; padding: 0 16px 0 11px; }
.tsearch-text { margin-left: 7px; font-size: 14px; color: #8c8c8c; }
.tasks { display: flex; height: 40px; flex: none; }
.task { position: relative; width: 49px; height: 40px; display: flex; align-items: center; justify-content: center; }
.task.on::after, .task.active::after { content: ""; position: absolute; left: 4px; right: 5px; bottom: 0; height: 3px; background: #6fb2ea; }
.task.active { background: #2a3034; }
.task.active::after { left: 0; right: 0; }
.cpu { width: 60px; flex: none; text-align: center; display: flex; flex-direction: column; gap: 2px; line-height: 15px; font-size: 12px; color: #eee; }
.tray-zh { width: 14px; font-size: 14px; font-weight: 500; }
.clock { width: 60px; flex: none; margin-left: 12px; text-align: center; display: flex; flex-direction: column; gap: 3px; line-height: 15px; font-family: "Open Sans", sans-serif; font-size: 13px; color: #eee; }
.notify { flex: 1; height: 40px; background: #000; position: relative; padding: 14px 0 0 23px; }
.ncount { position: absolute; left: 26px; top: 17px; width: 24px; height: 20px; border-radius: 10px; background: #333; border: 1px solid #777; color: #fff; font: 700 14px/18px "Liberation Sans", sans-serif; text-align: center; }
```
